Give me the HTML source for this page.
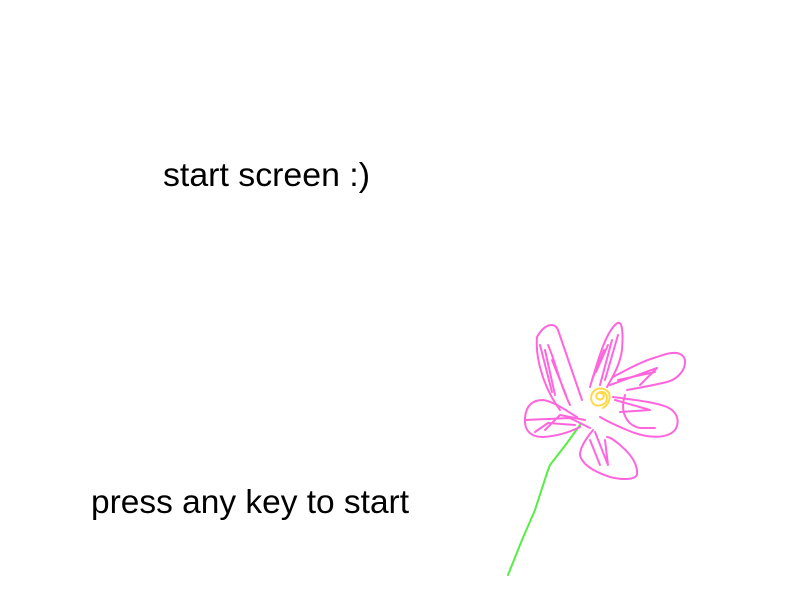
<!DOCTYPE html>
<html><head><meta charset="utf-8"><style>
html,body{margin:0;padding:0;background:#fff;width:800px;height:600px;overflow:hidden}
svg{display:block}
</style></head><body>
<svg width="800" height="600" viewBox="0 0 800 600" xmlns="http://www.w3.org/2000/svg">
<text x="163" y="186" font-family="Liberation Sans, sans-serif" font-size="33" fill="#000" textLength="207" lengthAdjust="spacingAndGlyphs">start screen :)</text>
<text x="91" y="513" font-family="Liberation Sans, sans-serif" font-size="33" fill="#000" textLength="318" lengthAdjust="spacingAndGlyphs">press any key to start</text>
<g fill="none" stroke-linecap="round" stroke-linejoin="round">
<path d="M580 425 L567 443 L550 465 L547 473 L535 510 L522 540 L508 575" stroke="#55ee44" stroke-width="2"/>
<g stroke="#ff66dd" stroke-width="2">
<path d="M582 400 C575 380 565 350 558 330 C555 322 545 323 537 337 C535 360 545 390 560 410"/>
<path d="M548 345 C555 360 560 385 570 405 M545 350 L555 395 M540 345 L552 392 M552 360 L566 395"/>
<path d="M590 387 C598 360 605 335 615 325 C620 320 624 322 622 350 C620 365 612 378 607 387"/>
<path d="M600 385 L612 340 M596 372 L608 345 M592 380 L604 350 M605 380 L618 335"/>
<path d="M613 377 C630 368 645 360 657 357 C670 352 682 350 685 360 C686 372 675 380 667 382 C650 386 638 388 627 390"/>
<path d="M640 385 L657 368 L610 385 M618 380 L655 372"/>
<path d="M613 397 C635 400 655 402 667 407 C678 412 680 422 675 430 C668 438 650 440 627 430 C615 425 605 420 600 417"/>
<path d="M625 395 C620 410 625 425 640 428 L655 428 M615 400 L650 410 L620 412"/>
<path d="M593 430 C585 440 580 448 580 455 C582 465 595 472 610 477 C622 480 634 480 637 475 C638 465 632 455 620 445 C614 440 610 437 607 437"/>
<path d="M595 432 L608 465 L605 440 M590 440 L600 465"/>
<path d="M577 417 C565 410 555 402 543 400 C533 400 526 405 525 418 C524 430 530 437 543 437 C558 436 570 432 580 427"/>
<path d="M525 420 L570 418 L590 428 M535 432 L548 423 L575 425 M545 430 L560 415 L585 420"/>
</g>
<g stroke="#ffd84a" stroke-width="2">
<path d="M600 393 C604 393 605 397 602 399 C598 401 595 397 597 394 C600 390 607 392 607 398 C607 404 600 407 595 405 C590 402 590 395 594 391 C598 387 606 388 609 393 C611 399 608 405 603 408"/>
</g>
</g>
</svg>
</body></html>
